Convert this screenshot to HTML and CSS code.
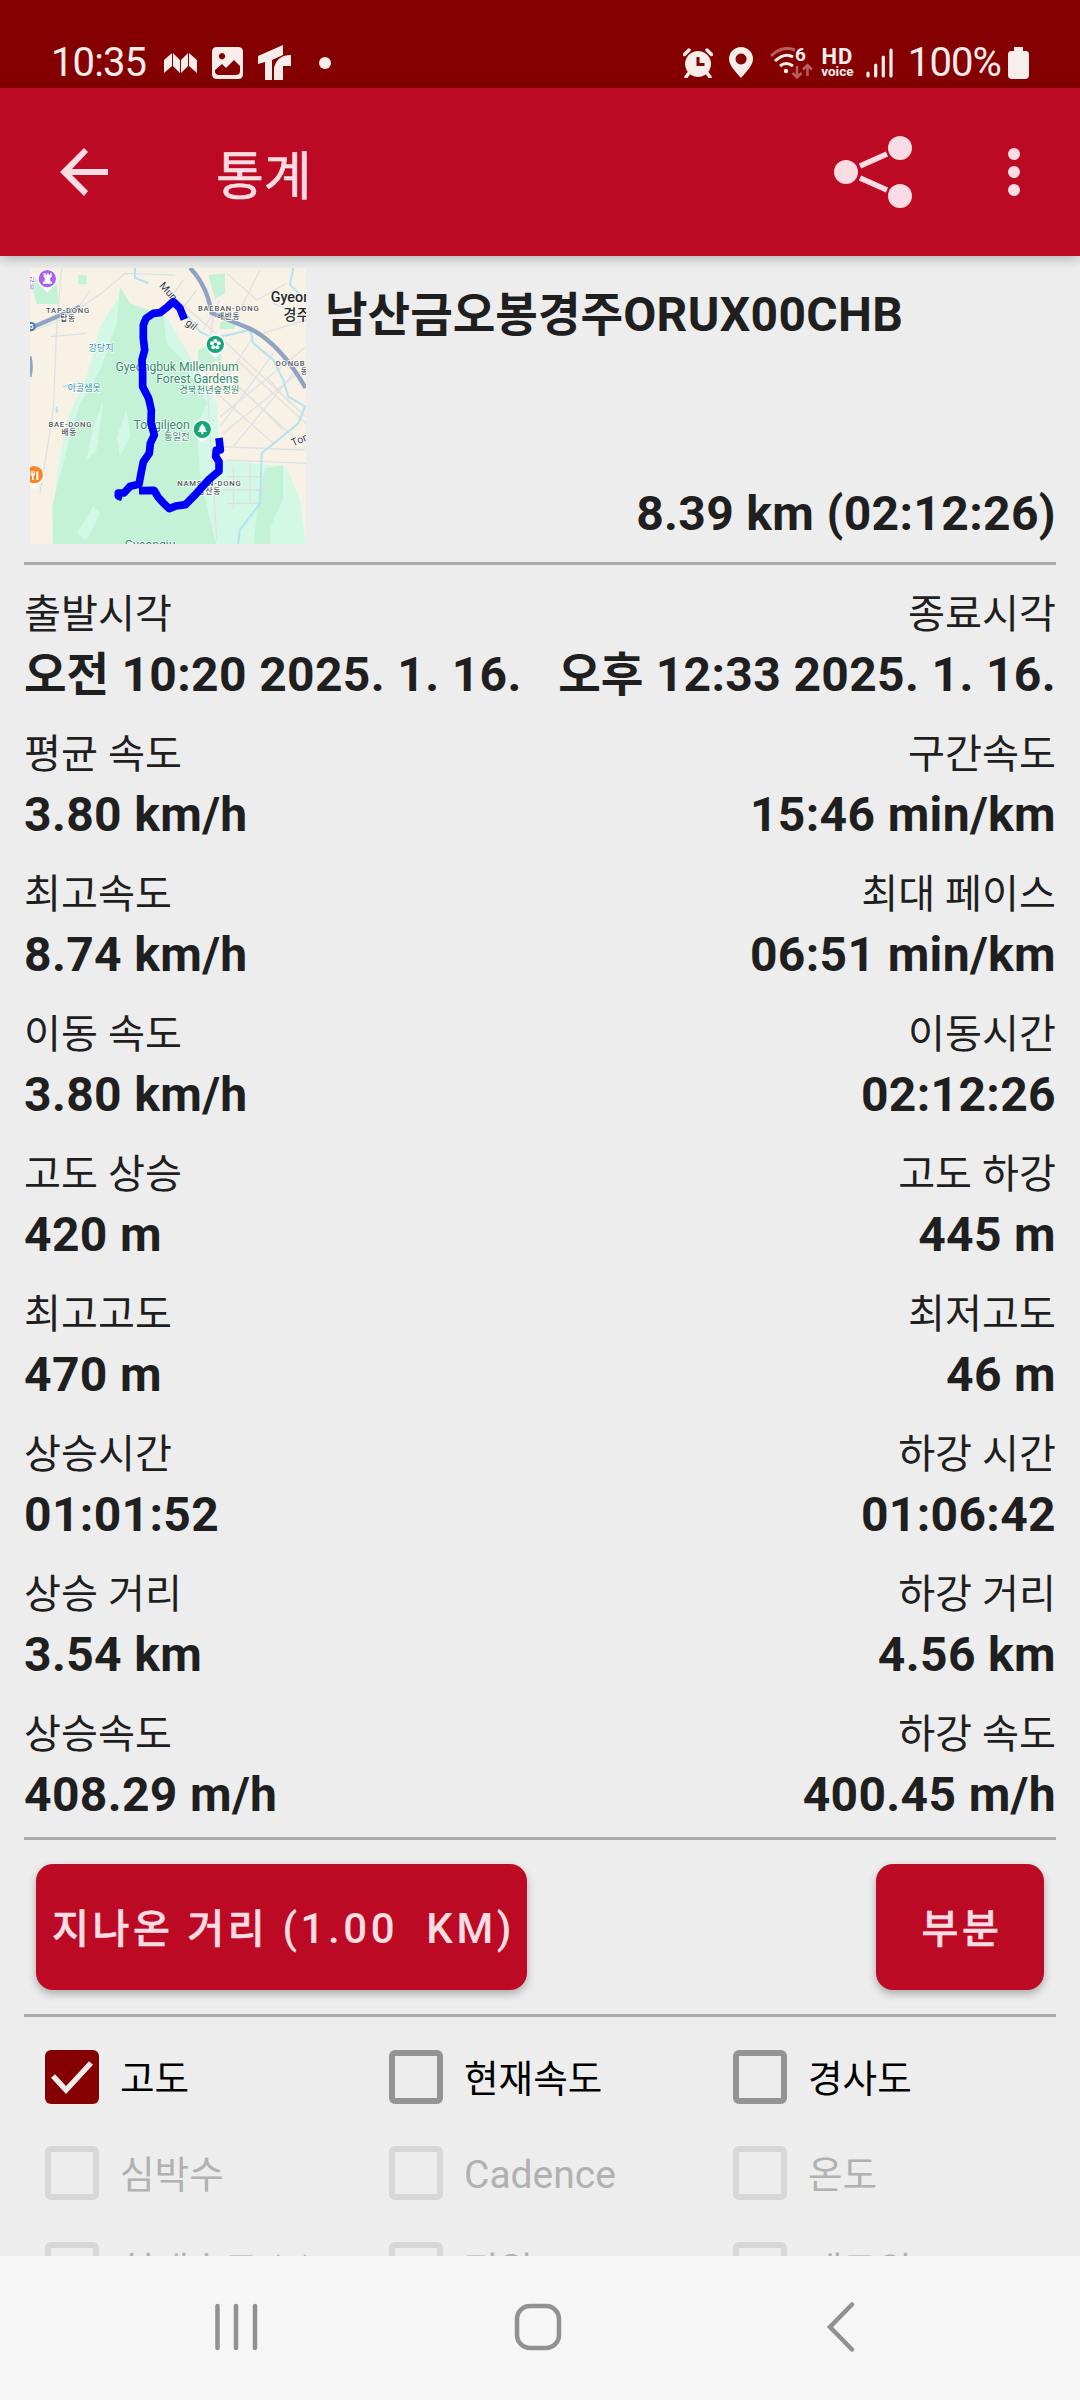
FILE: index.html
```html
<!DOCTYPE html>
<html lang="ko">
<head>
  <meta charset="utf-8" />
  <meta name="viewport" content="width=device-width, initial-scale=1.0">
  <title>통계</title>
  <link rel="stylesheet" href="styles.css">
</head>
<body>

  <!-- Status bar -->
  <div class="status-bar">
    <div class="status-left">
      <span class="status-text clock">10:35</span>
      <svg class="icon-m" width="34" height="20" viewBox="0 0 34 20"><path d="M0 7 8 0v13L0 20zM9 0l7 7v13L9 13zM17 7l7-7v13l-7 7zM25 0l8 7v13l-8-7z"/></svg>
      <svg class="icon-image" width="31" height="32" viewBox="0 0 31 32"><path fill-rule="evenodd" d="M5 0h21q5 0 5 5v22q0 5-5 5H5q-5 0-5-5V5q0-5 5-5zM3 24q0 4 4 4h17q4 0 4-4v-5l-6-6-8 8-4-4-7 6zM10 6a3.200 3.200 0 1 0 .1 0z"/></svg>
      <svg class="icon-t" width="33" height="35" viewBox="0 0 33 35"><path d="M0 11 25 0v10l-11 5v20H7V17l-7 2zM16 35V23q3-13 17-13v11h-8v14z"/></svg>
      <span class="dot"></span>
    </div>
    <div class="status-right">
      <svg class="icon-alarm" width="30" height="30" viewBox="0 0 30 30"><path fill-rule="evenodd" d="M15 3a13 13 0 1 0 .1 0zM13.500 9h3v6h5v3h-8z"/><path class="stroke" d="M1.500 6.500 6 2M28.500 6.500 24 2M6 25l-3 4M24 25l3 4" stroke-width="3.500" stroke-linecap="round"/></svg>
      <svg class="icon-pin" width="24" height="31" viewBox="0 0 24 31"><path fill-rule="evenodd" d="M12 0a12 12 0 0 1 12 12c0 6-6 12-12 19C6 24 0 18 0 12A12 12 0 0 1 12 0zM12 6.500a5.500 5.500 0 1 0 .1 0z"/></svg>
      <svg class="icon-wifi" width="43" height="32" viewBox="0 0 43 32">
        <path class="stroke faded" d="M1 9Q12-2 25 3" stroke-width="3"/>
        <path class="stroke" d="M5 14q10-9 18-4M10 19q6-5 13 0" stroke-width="3"/>
        <circle cx="16" cy="24" r="2.200"/>
        <path class="stroke faded" d="M27 19v11M22.500 26l4.500 4.500 4.500-4.500M37.500 29V19M33 22.500l4.500-4.500 4.500 4.500" stroke-width="2.500"/>
        <text x="25" y="14" font-size="19">6</text>
      </svg>
      <span class="hd"><b>HD</b><small>voice</small></span>
      <svg class="icon-signal" width="28" height="30" viewBox="0 0 28 30"><path class="stroke" d="M2 25v3M9.700 17v11M17.300 9v19M25 2v26" stroke-width="3.200" stroke-linecap="round"/></svg>
      <span class="status-text battery-level">100%</span>
      <svg class="icon-battery" width="21" height="32" viewBox="0 0 21 32"><path d="M6 0h9v4h3q3 0 3 4v20q0 4-4 4H4q-4 0-4-4V8q0-4 3-4h3z"/></svg>
    </div>
  </div>

  <!-- App bar -->
  <header class="app-bar">
    <svg class="back" width="48" height="48" viewBox="0 0 48 48"><path d="M48 21v6H12l16 16-4 5L0 24 24 0l4 4-16 17z"/></svg>
    <h1>통계</h1>
    <svg class="share" width="78" height="72" viewBox="0 0 78 72"><circle cx="12" cy="36" r="12"/><circle cx="66" cy="12" r="12"/><circle cx="66" cy="60" r="12"/><path class="stroke" d="m26 30 27-12M26 42l27 12" stroke-width="5.500"/></svg>
    <svg class="more" width="12" height="48" viewBox="0 0 12 48"><circle cx="6" cy="6" r="6"/><circle cx="6" cy="24" r="6"/><circle cx="6" cy="42" r="6"/></svg>
  </header>

  <main class="content">
    <section class="track">
      <svg class="map" width="276" height="276" viewBox="30 24 828 828">
        <rect class="land" x="30" y="24" width="828" height="828"/>
        <!-- parks -->
        <path class="park-light" d="M330 140 440 170 510 290 590 430 600 600 800 620 840 720 858 852H95L110 650 140 480 200 350 240 200 290 120z"/>
        <path class="park" d="M300 80 330 130 430 165 440 250 480 290 560 430 530 500 540 640 560 740 590 852H100L96 740 150 530 180 430 240 330 290 190zM30 60l80-8 5 80H50zM565 45l50-5v60l-30 18zM535 270l60-30 10 60-70 20zM175 45h25v28h-25zM700 852 720 680 735 625 790 615v100l-40 90v47zM600 185h45v22h-45z"/>
        <path class="park-light" d="M200 600 220 500l30-80-20 150zM290 530l30-80 10 80-30 60zM170 820l50-80 20 20-40 80z"/>
        <!-- minor roads -->
        <path class="road" d="M125 24 110 200 100 450 60 700M45 210l80-30 120-80 70-60 150 5M90 230l110-10M170 150l40-60M440 90l180 160 238 220M490 60 440 130M530 90l-60 80M600 120l-50 90M580 160l-20 180 30 500M600 470l258-210M610 520l248-200M605 560l250 10M620 600l238 10M650 300l208 190M600 330l220 200M590 400l170 150M700 230 590 400M760 280 600 500M820 340 640 560M640 620v130M690 610v120M620 650h120M610 690h130M620 730h110M700 420l90 90M740 350l70 80M620 40l90 80 90-50M720 30l-70 140M858 180l-130 40M760 130l98 40"/>
        <!-- water -->
        <path class="water" d="M345 24v30l40 15M430 75l110 140 40 20 110-25 10 40 60 50 30 60 15 50 50 30-20 50-110 90-5 150-60 80-15 110M820 24l-10 50 40 40M130 380l50-10M110 440v18"/>
        <!-- highways -->
        <path class="highway" d="M510 24q50 50 65 135l110 45q90 40 172 180M30 205l150-65M28 290q8 30 0 60"/>
        <g class="place">
          <text x="144" y="159">TAP-DONG</text><text x="144" y="183">탑동</text>
          <text x="626" y="153">BAEBAN-DONG</text><text x="626" y="177">배반동</text>
          <text x="151" y="500">BAE-DONG</text><text x="148" y="524">배동</text>
          <text x="812" y="317">DONGB</text><text x="854" y="341">동</text>
          <text x="568" y="679">NAMSAN-DONG</text><text x="568" y="703">남산동</text>
        </g>
        <g class="lake"><text x="243" y="273">강당지</text><text x="193" y="394">아골샘못</text></g>
        <g class="poi">
          <text x="656" y="334">Gyeongbuk Millennium</text><text x="656" y="370">Forest Gardens</text><text class="ko" x="658" y="398">경북천년숲정원</text>
          <text x="509" y="508">Tongiljeon</text><text class="ko" x="509" y="539">통일전</text><text x="466" y="868">Gyeongju</text>
        </g>
        <g class="city"><text x="752" y="127">Gyeongju</text><text x="790" y="180">경주</text></g>
        <g class="street"><text transform="translate(416 78) rotate(48)">Mun</text><text transform="translate(494 192) rotate(38)">gil</text><text transform="translate(820 560) rotate(-25)">Ton</text><text class="purple" transform="translate(40 92) rotate(-90)">릉원</text></g>
        <!-- markers -->
        <path class="marker-edge" d="m82 97-14-14h28zM586 295l-15-15h30zM547 548l-15-15h30zM43 686l-14-14h28z"/>
        <circle class="marker purple" cx="82" cy="56" r="28"/><path class="glyph" d="M71 40h6v5h4v-5h5v5h4v-5h5v11l-5 4 2 10h4v6H69v-6h4l2-10-4-4z"/>
        <circle class="marker green" cx="586" cy="253" r="28"/><g class="glyph"><circle cx="586" cy="243" r="6"/><circle cx="596" cy="250" r="6"/><circle cx="592" cy="262" r="6"/><circle cx="580" cy="262" r="6"/><circle cx="576" cy="250" r="6"/></g>
        <circle class="marker green" cx="547" cy="508" r="28"/><path class="glyph" d="m547 491 11 15h-4l7 10h-11v7h-6v-7h-11l7-10h-4z"/>
        <circle class="marker orange" cx="43" cy="644" r="28"/><path class="glyph" d="M32 633h3v8h2v-8h3v8h2v-8h3v11l-4 4v12h-5v-12l-4-4zM49 660v-25q5-4 6 0v25z"/>
        <circle class="shield" cx="33" cy="200" r="14"/><text class="shield-text" x="28" y="208">5</text>
        <path class="route" d="M493 178 480 145 460 125 443 140 420 158 400 160 378 175 370 195V235l4 35-8 30 2 40v40l18 35 8 35-1 40 10 35-12 25-3 30-18 25-6 30-7 38-27 6-18 20H295V708l12 4M357 692l45-1 12 20 16 18 18 17 20-8 28-4 28-28 18-20 25-28 30-25V605l-10-15 2-20h12l-4-36"/>
      </svg>
      <div class="track-info">
        <h2><span class="ko">남산금오봉경주</span>ORUX00CHB</h2>
        <p>8.39 km (02:12:26)</p>
      </div>
    </section>

    <section class="stats">
      <div class="stat-row">
        <div class="stat"><span class="label">출발시각</span><span class="value"><span class="ko">오전</span> 10:20 2025. 1. 16.</span></div>
        <div class="stat"><span class="label">종료시각</span><span class="value"><span class="ko">오후</span> 12:33 2025. 1. 16.</span></div>
      </div>
      <div class="stat-row">
        <div class="stat"><span class="label">평균 속도</span><span class="value">3.80 km/h</span></div>
        <div class="stat"><span class="label">구간속도</span><span class="value">15:46 min/km</span></div>
      </div>
      <div class="stat-row">
        <div class="stat"><span class="label">최고속도</span><span class="value">8.74 km/h</span></div>
        <div class="stat"><span class="label">최대 페이스</span><span class="value">06:51 min/km</span></div>
      </div>
      <div class="stat-row">
        <div class="stat"><span class="label">이동 속도</span><span class="value">3.80 km/h</span></div>
        <div class="stat"><span class="label">이동시간</span><span class="value">02:12:26</span></div>
      </div>
      <div class="stat-row">
        <div class="stat"><span class="label">고도 상승</span><span class="value">420 m</span></div>
        <div class="stat"><span class="label">고도 하강</span><span class="value">445 m</span></div>
      </div>
      <div class="stat-row">
        <div class="stat"><span class="label">최고고도</span><span class="value">470 m</span></div>
        <div class="stat"><span class="label">최저고도</span><span class="value">46 m</span></div>
      </div>
      <div class="stat-row">
        <div class="stat"><span class="label">상승시간</span><span class="value">01:01:52</span></div>
        <div class="stat"><span class="label">하강 시간</span><span class="value">01:06:42</span></div>
      </div>
      <div class="stat-row">
        <div class="stat"><span class="label">상승 거리</span><span class="value">3.54 km</span></div>
        <div class="stat"><span class="label">하강 거리</span><span class="value">4.56 km</span></div>
      </div>
      <div class="stat-row">
        <div class="stat"><span class="label">상승속도</span><span class="value">408.29 m/h</span></div>
        <div class="stat"><span class="label">하강 속도</span><span class="value">400.45 m/h</span></div>
      </div>
    </section>

    <section class="actions">
      <button class="btn btn-distance"><span class="ko">지나온 거리</span> (1.00&nbsp; KM)</button>
      <button class="btn btn-part"><span class="ko">부분</span></button>
    </section>

    <section class="options">
      <label class="option"><span class="box checked"><svg width="54" height="54" viewBox="0 0 54 54"><path d="m8 26 13 14 25-27" /></svg></span><span>고도</span></label>
      <label class="option"><span class="box"></span><span>현재속도</span></label>
      <label class="option"><span class="box"></span><span>경사도</span></label>
      <label class="option disabled"><span class="box"></span><span>심박수</span></label>
      <label class="option disabled"><span class="box"></span><span class="latin">Cadence</span></label>
      <label class="option disabled"><span class="box"></span><span>온도</span></label>
      <label class="option disabled"><span class="box"></span><span>현재속도 (S)</span></label>
      <label class="option disabled"><span class="box"></span><span>전원</span></label>
      <label class="option disabled"><span class="box"></span><span>네트워</span></label>
    </section>
  </main>

  <!-- System navigation -->
  <nav class="nav-bar">
    <svg width="46" height="48" viewBox="0 0 46 48"><path d="M4.500 3v42M23 3v42M42 3v42"/></svg>
    <svg width="48" height="48" viewBox="0 0 48 48"><rect x="3" y="3" width="42" height="42" rx="13"/></svg>
    <svg width="30" height="50" viewBox="0 0 30 50"><path d="M26 2.500 4 25l22 22.500"/></svg>
  </nav>

</body>
</html>
```

FILE: styles.css
```css
/* --- General --- */
:root {
  --bg-color: #ededed;
  --status-color: #850000;
  --primary-color: #bd0a24;
  --on-primary: #f9dde3;
  --text-color: #1f1f1f;
  --divider: #aaaaaa;
}
*, *::before, *::after {
  box-sizing: border-box;
}
body {
  margin: 0;
  height: 2400px;
  display: flex;
  flex-direction: column;
  overflow: hidden;
  background: var(--bg-color);
  color: var(--text-color);
  font-family: Roboto, "Noto Sans CJK KR", sans-serif;
}
h1, h2, p {
  margin: 0;
}
svg {
  display: block;
  flex: none;
}
.stroke {
  fill: none;
  stroke: currentColor;
}

/* --- Status bar --- */
.status-bar {
  height: 88px;
  flex: none;
  display: flex;
  justify-content: space-between;
  padding: 37px 51px 0;
  background: var(--status-color);
  color: #f7eeec;
}
.status-bar svg {
  fill: currentColor;
}
.status-left, .status-right {
  display: flex;
  align-items: center;
  height: 51px;
}
.status-text {
  font-size: 40px;
  line-height: 51px;
}
.clock {
  width: 97px;
  letter-spacing: -0.9px;
}
.battery-level {
  letter-spacing: -0.9px;
}
.icon-m {
  margin-left: 16px;
}
.icon-image {
  margin-left: 14px;
}
.icon-t {
  margin-left: 15px;
}
.dot {
  width: 12px;
  height: 12px;
  margin-left: 28px;
  border-radius: 50%;
  background: currentColor;
}
.icon-pin {
  margin-left: 16px;
}
.icon-wifi {
  margin-left: 17px;
  font-weight: 700;
}
.faded {
  opacity: 0.4;
}
.hd {
  width: 33px;
  margin: 0 0 0 8px;
  display: flex;
  flex-direction: column;
  align-items: center;
}
.hd b {
  font-size: 22px;
  line-height: 17px;
  letter-spacing: 1px;
}
.hd small {
  font-size: 13.500px;
  line-height: 12px;
  font-weight: 700;
}
.icon-signal {
  margin: 0 14px 0 12px;
}
.icon-battery {
  margin-left: 7px;
}

/* --- App bar --- */
.app-bar {
  height: 168px;
  flex: none;
  display: flex;
  align-items: center;
  padding: 0 60px;
  background: var(--primary-color);
  color: var(--on-primary);
  box-shadow: 0 2px 12px rgba(0, 0, 0, 0.28);
  z-index: 1;
}
.app-bar svg {
  fill: currentColor;
}
.app-bar h1 {
  margin: 0 auto 0 108px;
  font-size: 52px;
  font-weight: 400;
  -webkit-text-stroke: 0.6px currentColor;
}
.share {
  margin-right: 96px;
}

/* --- Content --- */
.content {
  flex: 1;
  min-height: 0;
  overflow: hidden;
  padding: 12px 24px 0;
}
.track {
  height: 297px;
  display: flex;
  border-bottom: 3px solid var(--divider);
}
.map {
  margin: 0 19px 0 6px;
}
.track-info {
  flex: 1;
  display: flex;
  flex-direction: column;
  justify-content: space-between;
  padding: 17px 0 18px;
}
.track-info h2, .track-info p {
  font-size: 48px;
  line-height: 60px;
  font-weight: 700;
  letter-spacing: 0.350px;
}
.track-info p {
  text-align: right;
}
h2 .ko, .value .ko {
  font-size: 46.300px;
  line-height: 1;
  letter-spacing: 0;
}

/* --- Map --- */
.map text {
  paint-order: stroke;
  stroke: #fff;
  stroke-width: 4px;
}
.land { fill: #f8f2e6; }
.park { fill: #c4f2d7; }
.park-light { fill: #d3f9e6; }
.road {
  fill: none;
  stroke: #dfe0e3;
  stroke-width: 4;
}
.water {
  fill: none;
  stroke: #b4e2f0;
  stroke-width: 6;
}
.highway {
  fill: none;
  stroke: #8fa3c2;
  stroke-width: 13;
}
.place {
  font-size: 23px;
  font-weight: 500;
  letter-spacing: 2.300px;
  text-anchor: middle;
  fill: #52565a;
}
.lake {
  font-size: 27px;
  text-anchor: middle;
  fill: #2c93a8;
}
.poi {
  font-size: 36.500px;
  text-anchor: end;
  fill: #31886b;
}
.poi .ko {
  font-size: 28px;
}
.city {
  font-size: 43px;
  font-weight: 500;
  fill: #26282b;
}
.street {
  font-size: 32px;
  fill: #3c4043;
}
.street .purple {
  font-size: 24px;
  fill: #a25be0;
}
.marker {
  stroke: #fff;
  stroke-width: 4;
}
.marker-edge, .glyph {
  fill: #fff;
}
.marker.purple { fill: #ac62f0; }
.marker.green { fill: #18a577; }
.marker.orange { fill: #fb8524; }
.shield { fill: #3f7dba; }
.map .shield-text {
  font-size: 22px;
  font-weight: 700;
  fill: #fff;
  stroke: none;
}
.route {
  fill: none;
  stroke: #0000fa;
  stroke-width: 23;
  stroke-linejoin: round;
}

/* --- Stats --- */
.stats {
  display: flex;
  flex-direction: column;
  gap: 20px;
  padding: 20px 0 12px;
  border-bottom: 3px solid var(--divider);
}
.stat-row {
  display: flex;
  justify-content: space-between;
}
.stat {
  display: flex;
  flex-direction: column;
}
.stat:last-child {
  align-items: flex-end;
}
.label {
  height: 60px;
  font-size: 40.200px;
  line-height: 60px;
}
.value {
  height: 60px;
  font-size: 48px;
  line-height: 60px;
  font-weight: 700;
  letter-spacing: 0.350px;
}

/* --- Buttons --- */
.actions {
  display: flex;
  justify-content: space-between;
  padding: 24px 12px;
  border-bottom: 3px solid var(--divider);
}
.btn {
  height: 126px;
  padding: 0 0 3px 4px;
  border: none;
  border-radius: 17px;
  background: var(--primary-color);
  color: var(--on-primary);
  font-family: inherit;
  font-size: 42px;
  font-weight: 500;
  letter-spacing: 3.600px;
  white-space: nowrap;
  box-shadow: 0 4px 8px rgba(0, 0, 0, 0.28);
}
.btn .ko {
  font-size: 40.200px;
  -webkit-text-stroke: 0.5px currentColor;
}
.btn-distance {
  width: 491px;
}
.btn-part {
  width: 168px;
}

/* --- Chart options --- */
.options {
  display: grid;
  grid-template-columns: repeat(3, 344px);
  row-gap: 42px;
  padding: 33px 0 0 21px;
}
.option {
  height: 54px;
  display: flex;
  align-items: center;
  gap: 21px;
  color: #000;
  font-size: 37.600px;
  line-height: 54px;
  white-space: nowrap;
}
.option span:last-child {
  padding-top: 3px;
}
.option .latin {
  font-size: 39px;
}
.box {
  width: 54px;
  height: 54px;
  flex: none;
  border: 6px solid #949494;
  border-radius: 6px;
}
.box.checked {
  border: none;
  background: var(--status-color);
}
.box.checked path {
  fill: none;
  stroke: var(--bg-color);
  stroke-width: 5.500;
}
.option.disabled {
  color: #b1b1b1;
}
.option.disabled .box {
  border-color: #d7d7d7;
}

/* --- Navigation bar --- */
.nav-bar {
  height: 144px;
  flex: none;
  display: flex;
  align-items: center;
  padding: 0 0 2px 213px;
  background: #f6f6f6;
}
.nav-bar svg {
  margin-right: 255px;
  fill: none;
  stroke: #919191;
  stroke-width: 4.500;
  stroke-linecap: round;
}
.nav-bar svg:last-child {
  margin-left: 9px;
}
```
